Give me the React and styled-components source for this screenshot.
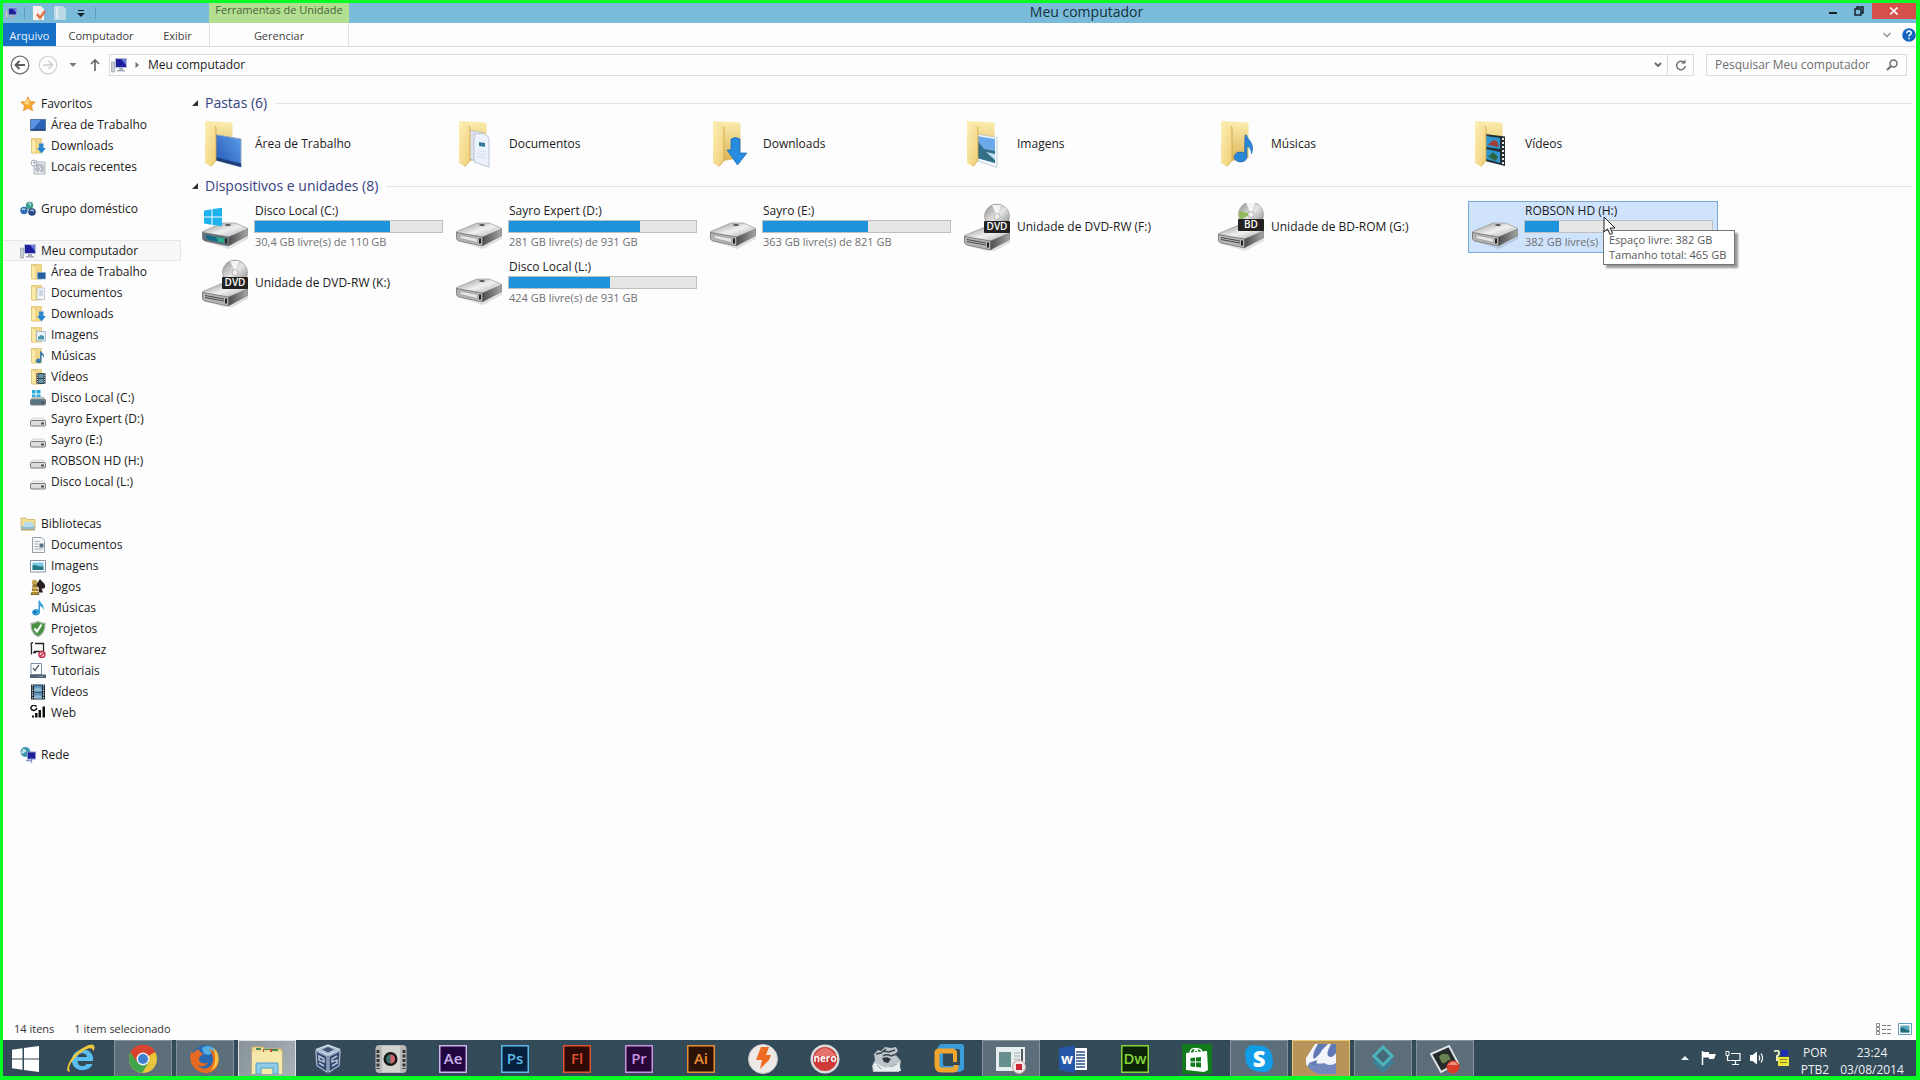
import styled, { createGlobalStyle, css } from "styled-components";

const GlobalStyle = createGlobalStyle`
  * {
    box-sizing: border-box;
  }

  body {
    margin: 0;
    background: #fdfdfd;
    color: #1b1b1b;
    font-family: "Open Sans", "Noto Sans", sans-serif;
    font-size: 12px;
    line-height: 16px;
  }

  button,
  input {
    margin: 0;
    padding: 0;
    border: 0;
    background: none;
    color: inherit;
    font: inherit;
  }

  svg {
    display: block;
    flex: none;
  }
`;

const Screen = styled.main`
  display: flex;
  flex-direction: column;
  min-height: 100vh;
  border: solid #08fb25;
  border-width: 3px 4px 4px 3px;
`;

/* ---------- title bar ---------- */

const TitleBar = styled.header`
  display: flex;
  height: 20px;
  background: #7abbd9;
`;

const QuickAccess = styled.div`
  display: flex;
  align-items: center;
  gap: 7px;
  width: 206px;
  padding-left: 2px;
`;

const QuickButton = styled.button`
  display: flex;
  justify-content: center;
  width: 14px;
`;

const QuickDivider = styled.span`
  width: 1px;
  height: 12px;
  background: #5f9cba;
`;

const ContextTitle = styled.div`
  width: 140px;
  background: #b3df91;
  color: #49623c;
  text-align: center;
  line-height: 13px;
  font-size: 11px;
`;

const WindowTitle = styled.h1`
  flex: 1;
  margin: 0;
  padding-left: 4px;
  color: #16303d;
  font-size: 14px;
  font-weight: 400;
  line-height: 18px;
  text-align: center;
`;

const WindowButton = styled.button`
  display: flex;
  align-items: center;
  justify-content: center;
  width: ${(p) => (p.$close ? 44 : 26)}px;
  height: 16px;
  background: ${(p) => (p.$close ? "#d5504a" : "transparent")};
`;

/* ---------- ribbon ---------- */

const Ribbon = styled.nav`
  display: flex;
  align-items: center;
  height: 24px;
  border-bottom: 1px solid #dcdddf;
  font-size: 11px;
`;

const RibbonTab = styled.button`
  width: ${(p) => p.$width}px;
  height: 23px;
  padding-top: 2px;
  color: #3d3d3d;
  ${(p) =>
    p.$file &&
    css`
      background: #1670c6;
      color: #e6f1fc;
    `}
  ${(p) =>
    p.$context &&
    css`
      margin-left: auto;
      border: solid #dfe0e1;
      border-width: 0 1px;
    `}
`;

const RibbonTabs = styled.div`
  display: flex;
  width: 346px;
`;

const RibbonTools = styled.div`
  display: flex;
  align-items: center;
  gap: 10px;
  margin-left: auto;
`;

/* ---------- address row ---------- */

const AddressRow = styled.div`
  display: flex;
  align-items: center;
  padding: 7px 9px 0 7px;
`;

const NavButtons = styled.div`
  display: flex;
  align-items: center;
`;

const IconButton = styled.button`
  display: flex;
  align-items: center;
  justify-content: center;
  align-self: stretch;
  min-width: ${(p) => p.$width || 0}px;
`;

const AddressBar = styled.div`
  display: flex;
  align-items: center;
  flex: 1;
  height: 22px;
  border: 1px solid #dcdcdc;
  padding-left: 1px;
`;

const Crumb = styled.button`
  margin-left: 8px;
`;

const CrumbArrow = styled.span`
  display: flex;
  margin-left: 8px;
`;

const AddressTools = styled.div`
  display: flex;
  align-self: stretch;
  margin-left: auto;

  > :last-child {
    border-left: 1px solid #dcdcdc;
  }
`;

const SearchBox = styled.label`
  display: flex;
  align-items: center;
  width: 201px;
  height: 22px;
  margin-left: 12px;
  padding: 0 8px;
  border: 1px solid #dcdcdc;
`;

const SearchInput = styled.input`
  flex: 1;
  min-width: 0;
  outline: 0;

  &::placeholder {
    color: #6f6f6f;
    opacity: 1;
  }
`;

/* ---------- navigation pane ---------- */

const Body = styled.div`
  display: flex;
  flex: 1;
`;

const Sidebar = styled.nav`
  display: flex;
  flex-direction: column;
  gap: 21px;
  width: 178px;
  padding-top: 17px;
`;

const NavItem = styled.a`
  display: flex;
  align-items: center;
  gap: 5px;
  height: 21px;
  padding-left: ${(p) => (p.$root ? 17 : 27)}px;
  border: 1px solid ${(p) => (p.$active ? "#e6e6e6" : "transparent")};
  border-left: 0;
  background: ${(p) => (p.$active ? "#f7f7f7" : "none")};
  color: inherit;
  text-decoration: none;
  white-space: nowrap;
`;

/* ---------- file list ---------- */

const Content = styled.section`
  flex: 1;
  padding: 16px 4px 0 10px;
`;

const Group = styled.section`
  margin-bottom: 5px;
`;

const GroupHeader = styled.h2`
  display: flex;
  align-items: center;
  gap: 6px;
  height: 22px;
  margin: 0 0 4px;
  color: #35427f;
  font-size: 14px;
  font-weight: 400;

  &::after {
    content: "";
    flex: 1;
    height: 1px;
    margin-left: 2px;
    background: #e4e4e8;
  }
`;

const Tiles = styled.div`
  display: grid;
  grid-template-columns: repeat(auto-fill, 250px);
  gap: 4px;
  padding-left: 7px;
`;

const TileSlot = styled.div`
  position: relative;
`;

const Tile = styled.button`
  display: flex;
  align-items: center;
  gap: 6px;
  width: 100%;
  height: 52px;
  padding: 0 4px 0 1px;
  border: 1px solid ${(p) => (p.$selected ? "#7ba9d6" : "transparent")};
  background: ${(p) => (p.$selected ? "#cfe3fc" : "none")};
  text-align: left;
  white-space: nowrap;
`;

const TileInfo = styled.span`
  display: flex;
  flex-direction: column;
  flex: 1;
  padding-bottom: ${(p) => (p.$usage ? 2 : 0)}px;
`;

const TileText = styled.span`
  padding-left: 1px;
  ${(p) =>
    p.$dim &&
    css`
      color: #707070;
      font-size: 11px;
    `}
`;

const UsageBar = styled.span`
  height: 13px;
  margin: 1px 0;
  border: 1px solid #bfbfbf;
  background: #e6e6e6;
`;

const UsageFill = styled.span`
  display: block;
  height: 100%;
  background: #1c93da;
`;

const Tooltip = styled.div`
  position: absolute;
  top: 29px;
  left: 135px;
  padding: 1px 8px 2px 5px;
  border: 1px solid #767676;
  background: #fff;
  box-shadow: 3px 3px 2px rgba(0, 0, 0, 0.4);
  color: #575757;
  font-size: 11px;
  line-height: 15px;
  white-space: nowrap;
`;

const Pointer = styled.svg`
  position: absolute;
  top: 15px;
  left: 135px;
`;

/* ---------- status bar ---------- */

const StatusBar = styled.footer`
  display: flex;
  align-items: center;
  gap: 20px;
  height: 24px;
  padding: 2px 4px 0 11px;
  color: #333;
  font-size: 11px;
`;

const ViewButtons = styled.div`
  display: flex;
  gap: 6px;
  margin-left: auto;
`;

/* ---------- taskbar ---------- */

const Taskbar = styled.footer`
  display: flex;
  height: 36px;
  background: #334a58;
`;

const StartButton = styled.button`
  display: flex;
  align-items: center;
  width: 49px;
  padding: 2px 0 0 9px;
`;

const TaskList = styled.div`
  display: flex;
  gap: 4px;
`;

const taskStates = {
  open: css`
    border-color: #84929b;
    background: #5c6e7a;
  `,
  active: css`
    border-color: #dfe3e5;
    background: linear-gradient(120deg, #87929a, #a9b1b5);
  `,
  alert: css`
    border-color: #e2cb75;
    background: #b9945a;
  `,
};

const TaskButton = styled.button`
  display: flex;
  align-items: center;
  justify-content: center;
  width: 58px;
  height: 36px;
  padding-top: 1px;
  border: 1px solid transparent;
  border-bottom: 0;
  ${(p) => taskStates[p.$state]}
`;

const Tray = styled.div`
  display: flex;
  align-items: center;
  gap: 8px;
  margin-left: auto;
  color: #eef2f4;
`;

const TrayTexts = styled.div`
  display: flex;
  gap: 2px;
  padding: 5px 7px 0 0;
`;

const TrayText = styled.div`
  width: ${(p) => p.$width}px;
  line-height: 17px;
  text-align: center;
`;

const TrayMore = styled.button`
  margin-right: 4px;
`;

/* ---------- small icons ---------- */

const Small = ({ children, size = 16 }) => (
  <svg width={size} height={size} viewBox="0 0 16 16" aria-hidden="true">
    {children}
  </svg>
);

const ComputerIcon = ({ size }) => (
  <Small size={size}>
    <path d="M.5 5h3v10H.5z" fill="#c9ced6" stroke="#8b93a1" strokeWidth=".6" />
    <path d="M4.500 1.500h11v9h-11z" fill="#1d1f9c" stroke="#b5bdd6" />
    <path d="M10 2h5v6z" fill="#6a78e0" />
    <path d="M8 11h4v2H8zM6 13h8v1.500H6z" fill="#a6adba" />
  </Small>
);

const StarIcon = () => (
  <Small>
    <path d="M8 .8l2.200 4.700 5.100.6-3.800 3.500 1 5.200L8 12.200l-4.500 2.600 1-5.200L.7 6.100l5.100-.6z" fill="#f7ab35" stroke="#dd8a24" strokeWidth=".7" />
    <path d="M8 2.500L9.400 6 8 9 4 7z" fill="#fdd884" />
  </Small>
);

const DesktopIcon = () => (
  <Small>
    <path d="M.5 2.500h15v11H.5z" fill="#2c62b5" stroke="#557aa8" />
    <path d="M1 3h10L3 12H1z" fill="#5b93de" />
    <path d="M1 12.500h14v1H1z" fill="#26364e" />
  </Small>
);

const SmallFolder = ({ children }) => (
  <Small>
    <path d="M1.500.5h10v14.500h-10z" fill="#f0d88b" stroke="#d9b95d" strokeWidth=".6" />
    <path d="M1.500.5l4.500 2V15.500l-4.500-1z" fill="#fbe9a8" stroke="#d9b95d" strokeWidth=".5" />
    {children}
  </Small>
);

const DownMark = () => <path d="M9 5.500h4.500V10H16l-4.500 5.500L7 10h2z" fill="#2b87cf" />;
const DesktopMark = () => <path d="M7.500 8.500h8V15h-8z" fill="#275f9f" stroke="#7fa7cf" strokeWidth=".7" />;
const PageMark = () => (
  <>
    <path d="M7 3h7.500v11.500H7z" fill="#f4f6f9" stroke="#a9b1bf" strokeWidth=".7" />
    <path d="M9 6h4M9 8h4M9 10h4" stroke="#a2b3cd" />
  </>
);
const PictureMark = () => (
  <>
    <path d="M6.500 4.500h9v9.500h-9z" fill="#e5f2fa" stroke="#8faabd" strokeWidth=".7" />
    <path d="M8 10l3-2 3 1v3.500H8z" fill="#4b95a5" />
  </>
);
const NoteMark = () => <path d="M10 2.500c1 2 5 2.500 4 8-.3-2-1-3-2.500-3.500v6a2.800 2.300 0 1 1-1.500-2.200z" fill="#3c7cae" />;
const FilmMark = () => (
  <>
    <path d="M6.500 4H15.500v11h-9z" fill="#39434e" />
    <path d="M8.500 5h5v4h-5zM8.500 10h5v4h-5z" fill="#6695a8" />
    <path d="M7.500 4v11M14.500 4v11" stroke="#d5d8da" strokeDasharray="1 1" strokeWidth=".7" />
  </>
);

const RecentIcon = () => (
  <Small>
    <path d="M4 3h11v12H4z" fill="#e9ebef" stroke="#9aa2ad" strokeWidth=".8" />
    <path d="M6 6h7M6 8h3M10 8h4M5 10h5M11 10h3M6 12h3M10 12h4" stroke="#8791a0" />
    <circle cx="4" cy="4" r="3" fill="#f4f6f8" stroke="#8f99a6" strokeWidth=".8" />
    <path d="M4 2.500V4h1.500" fill="none" stroke="#536170" strokeWidth=".8" />
  </Small>
);

const HomegroupIcon = () => (
  <Small>
    <circle cx="9.500" cy="4.500" r="3.700" fill="#3e9c8d" />
    <circle cx="4" cy="9.500" r="3.700" fill="#2f6bb4" />
    <circle cx="12" cy="11" r="3.800" fill="#2c4785" />
    <path d="M8 2.500c2-1 3 1 2 2.500M2 9c1-2 3-1 3 0M10.500 10c1-1.500 3-1 3 .5" fill="none" stroke="#b7dfe2" strokeWidth="1.200" />
  </Small>
);

const SmallDrive = ({ system }) => (
  <Small>
    {system && <path d="M2 0h3.500v3.500H2zM6.500 0h4v3.500h-4zM2 4.500h3.500V8H2zM6.500 4.500h4V8h-4z" fill="#27a9dc" />}
    <path d="M2.500 7h11l2 3H.5z" fill={system ? "#b5bfc7" : "#efefef"} stroke="#b3b5b7" strokeWidth=".5" />
    <rect x=".5" y="9.500" width="15" height="5.500" rx="1" fill={system ? "#5b7587" : "#dcdcdc"} stroke="#767a7d" />
    <path d="M11 12.500h3" stroke="#48525a" strokeWidth="2" />
  </Small>
);

const LibraryIcon = () => (
  <Small>
    <path d="M1 2h5l1 1.500h8V13H1z" fill="#f1dd91" stroke="#cfb364" strokeWidth=".8" />
    <path d="M4 6h9v6H4z" fill="#b6dcec" />
    <path d="M1 9l3 2h8l3-2v5H1z" fill="#92bcd0" />
    <path d="M1 13h14v1.500H1z" fill="#b3a971" />
  </Small>
);

const DocumentIcon = () => (
  <Small>
    <path d="M2.500.5h9l3 3v12h-12z" fill="#f5f6f7" stroke="#8d959e" strokeWidth=".9" />
    <path d="M4.500 4.500h5M4.500 7h4M4.500 9.500h4M4.500 12h8" stroke="#a5adb7" />
    <path d="M9.500 6.500h4v4h-4z" fill="#5b7286" />
  </Small>
);

const PictureIcon = () => (
  <Small>
    <path d="M.5 2.500h15v11.500H.5z" fill="#fff" stroke="#8494a1" />
    <path d="M2.500 4.500h11v7.500h-11z" fill="#7cc7e4" />
    <path d="M2.500 7.500c3-1.500 5 1.500 11 1v3.500h-11z" fill="#237a84" />
  </Small>
);

const GamesIcon = () => (
  <Small>
    <path d="M10 0c2 3 6 4.500 5 8-.5 2-2.500 2-3.500 1.200L13 13.500H8l1-4.500-3-3z" fill="#27201e" />
    <circle cx="4.500" cy="3.500" r="2.700" fill="#c4a452" />
    <path d="M3 6h3.500l1 6 1.500 3.500H1L2.500 12z" fill="#b58d33" stroke="#5f451b" strokeWidth=".7" />
    <path d="M2 9h6M2 12.500h7" stroke="#f5de90" />
  </Small>
);

const MusicIcon = () => (
  <Small>
    <path d="M8.500.5h1.200c.8 3 5.200 4 3.800 10-.5-3-1.800-4-3.500-4.500v6.300a4 3.200 0 1 1-1.500-2.500z" fill="#3aa0d8" />
    <circle cx="5" cy="12" r="1.500" fill="#1769b1" />
  </Small>
);

const ShieldIcon = () => (
  <Small>
    <path d="M8 .5c2 1.200 4.500 1.800 7 1.800 0 6-1 10.500-7 13.200C2 12.800 1 8.300 1 2.300 3.500 2.300 6 1.700 8 .5z" fill="#489342" stroke="#a5b3a3" strokeWidth="1.300" />
    <path d="M4.500 7.500L7 10.500l4.500-7" fill="none" stroke="#fff" strokeWidth="2" />
  </Small>
);

const SoftwareIcon = () => (
  <Small>
    <path d="M3 .5C.5.5 1 3 1.500 4v8.500M5 1.500h8.500V9M4 9.500h8M3 10.500h3" fill="none" stroke="#222" strokeWidth="1.300" />
    <circle cx="12" cy="12.500" r="3" fill="#f4d7dc" stroke="#c42e4b" strokeWidth="1.400" />
    <path d="M10 14.500l4-4" stroke="#c42e4b" strokeWidth="1.200" />
  </Small>
);

const TutorialIcon = () => (
  <Small>
    <path d="M1 .5h10.500v11H1z" fill="#fff" stroke="#7e91a3" />
    <path d="M3 5l2 2.500L9 2" fill="none" stroke="#5a6c79" strokeWidth="1.400" />
    <path d="M0 11.500h16v3.500H0z" fill="#526272" />
    <path d="M8 13.500h6" stroke="#aebdcb" strokeDasharray="1 1" />
  </Small>
);

const FilmIcon = () => (
  <Small>
    <path d="M1 .5h14v15H1z" fill="#1c2934" />
    <path d="M4 1.500h8v6H4zM4 8.500h8v6H4z" fill="#5d93bd" />
    <path d="M4 5l4-1.500 4 2v2H4zM4 12l4-1 4 1.500v2H4z" fill="#8cb8d1" />
    <path d="M2.500 1v14M13.500 1v14" stroke="#d9e0e4" strokeWidth="1.200" strokeDasharray="1.200 1.200" />
  </Small>
);

const SignalIcon = () => (
  <Small>
    <path d="M2 10.500h2V12.500H2zM5 8h2.500v4.500H5zM8.500 5H11v7.500H8.500zM12.500 1.500H15v11h-2.500z" fill="#111" />
    <path d="M6.500 1.500C4-1 .5 1 1 3.500c.5 2 3.500 2.500 5 1L7 3" fill="none" stroke="#111" strokeWidth="1.500" />
  </Small>
);

const NetworkIcon = () => (
  <Small>
    <circle cx="5.500" cy="5" r="5" fill="#3d97b3" />
    <path d="M3 2c2 0 4 1 3 3-2 0-3 3-5 1z" fill="#bfe4df" />
    <path d="M7.500 5h8v7h-8z" fill="#1c239b" stroke="#8690cf" />
    <path d="M11.500 12v4M6 13.500h6" stroke="#8c94cb" strokeWidth="1.300" />
  </Small>
);

/* ---------- large icons ---------- */

const Large = ({ children }) => (
  <svg width="48" height="48" viewBox="0 0 48 48" aria-hidden="true">
    <defs>
      <linearGradient id="folderBack" x1="0" y1="0" x2="0" y2="1">
        <stop offset="0" stopColor="#fbedaf" />
        <stop offset="1" stopColor="#dcb456" />
      </linearGradient>
      <linearGradient id="folderFlap" x1="0" y1="0" x2="1" y2="1">
        <stop offset="0" stopColor="#fdf0b8" />
        <stop offset="1" stopColor="#efce76" />
      </linearGradient>
      <linearGradient id="screen" x1="0" y1="1" x2="1" y2="0">
        <stop offset="0" stopColor="#2454b0" />
        <stop offset="1" stopColor="#5b9fec" />
      </linearGradient>
      <linearGradient id="driveTop" x1="0" y1="0" x2="1" y2="1">
        <stop offset="0" stopColor="#8f8f8f" />
        <stop offset=".5" stopColor="#f0f0f0" />
        <stop offset="1" stopColor="#a2a2a2" />
      </linearGradient>
      <linearGradient id="driveSide" x1="0" y1="0" x2="1" y2="0">
        <stop offset="0" stopColor="#4c4c4c" />
        <stop offset="1" stopColor="#a8a8a8" />
      </linearGradient>
      <linearGradient id="disc" x1="0" y1="0" x2="1" y2="1">
        <stop offset="0" stopColor="#8d8d8d" />
        <stop offset=".5" stopColor="#e6e6e6" />
        <stop offset="1" stopColor="#7d7d7d" />
      </linearGradient>
    </defs>
    {children}
  </svg>
);

const Folder = ({ children }) => (
  <Large>
    <path d="M7 1l24 1.500q1.500.2 1.500 2V38L15 41z" fill="url(#folderBack)" />
    {children}
    <path d="M5 1.500q0-1 1-.5l9 5q1 .6 1 2v32.500L11 46.500 5 43z" fill="url(#folderFlap)" />
    <path d="M15 6q1 .6 1 2v32.500L11 46.500" fill="none" stroke="#cda544" strokeWidth=".8" />
  </Large>
);

const Drive = ({ system, slot, top = 19 }) => (
  <g transform={`translate(0 ${top})`}>
    <path d="M2.500 18.500l26 6.500 20-11v2.500L29 27z" fill="#000" opacity=".12" />
    <path d="M2.500 9.500L23 1h12.500L48 6.500v2L28 16 2.500 11z" fill="url(#driveTop)" stroke="#8d8d8d" strokeWidth=".6" />
    <path d="M2.500 10.500L28.500 15v9L5 19q-2.500-.8-2.500-3z" fill={system ? "#5d747d" : "#b4b4b4"} stroke="#6e6e6e" strokeWidth=".8" />
    <path d="M28.500 15L48 7v6.500L28.500 24z" fill="url(#driveSide)" stroke="#727272" strokeWidth=".6" />
    {system && <path d="M6 13l18 3.500v4.500L7 17.500z" fill="#146a86" />}
    {system && <path d="M16 15l8 1.500v4.500l-6-1.500z" fill="#2eaa8b" />}
    {slot && <path d="M5 13.500l19 3.500M5 15.500l19 3.500" stroke="#4a4a4a" />}
    {!system && !slot && <path d="M5.500 13l18 3.500v4l-17-4z" fill="#e6e6e6" stroke="#909090" strokeWidth=".6" />}
    <path d="M26 16.500v5" stroke="#222" strokeWidth="2" />
    <ellipse cx="28" cy="3" rx="3" ry="1" fill="#555" />
  </g>
);

const DesktopFolder = () => (
  <Folder>
    <path d="M15 14.500l26 4.500v28L15 40z" fill="url(#screen)" stroke="#93a9c4" />
    <path d="M15 37l26 6.500V47L15 40z" fill="#1d3f78" />
  </Folder>
);

const DocumentsFolder = () => (
  <Folder>
    <path d="M14 10l16 3v29l-16-3z" fill="#dfe2ee" stroke="#b2b6c4" strokeWidth=".7" />
    <path d="M20 14l10-.5 5 4V47l-15-5z" fill="#ecf2fb" stroke="#a7b3c5" strokeWidth=".7" />
    <path d="M25 22l6 1v4l-6-1z" fill="#387b9b" />
    <path d="M23 30l9 2M23 33l9 2M23 36l9 2" stroke="#cbd7e4" strokeWidth=".8" />
  </Folder>
);

const DownloadsFolder = () => (
  <Folder>
    <path d="M23 19q4-3 9 0v14h7L29.500 45 19 30h4z" fill="#278be0" stroke="#1768b4" strokeWidth=".7" />
  </Folder>
);

const PicturesFolder = () => (
  <Folder>
    <path d="M14 14l21 3.500v30L14 40z" fill="#f4fafe" stroke="#a9bccb" strokeWidth=".7" />
    <path d="M15 16l18 3v24l-18-5z" fill="#6ba9ea" />
    <path d="M15 20l7 9 11 2v12l-18-5z" fill="#356f86" />
    <path d="M24 32l9 2v6z" fill="#bfe0f0" />
  </Folder>
);

const MusicFolder = () => (
  <Folder>
    <path d="M29 15h1.500c1 5 9 8 5 19-.5-5-2-7-4.500-8v11.500a6.500 5 0 1 1-2.500-4.500z" fill="#2a87d5" stroke="#1a62aa" strokeWidth=".6" />
  </Folder>
);

const VideosFolder = () => (
  <Folder>
    <path d="M15 14l20 2.500V46L15 41z" fill="#222f35" />
    <path d="M16 16l14 2v11l-14-2zM16 29l14 3v11l-14-4z" fill="#2f96d1" />
    <path d="M18 25l5-5 4 1 2 6z" fill="#a33f3a" />
    <path d="M18 37l5-5 5 5-2 4z" fill="#2c6641" />
    <path d="M33 18v27" stroke="#e7e7e7" strokeWidth="2" strokeDasharray="2 2" />
  </Folder>
);

const SystemDrive = () => (
  <Large>
    <Drive system />
    <path d="M4 7.500l7.500-1.200v7.200H4zM12.500 6.100L22 4.800v8.700h-9.500zM4 14.500h7.500v7.200L4 20.500zM12.500 14.500H22v8.700l-9.500-1.300z" fill="#1eb3ee" />
  </Large>
);

const HardDrive = () => (
  <Large>
    <Drive />
  </Large>
);

const OpticalDrive = ({ label, tint, top = 23 }) => (
  <Large>
    <Drive slot top={top} />
    <circle cx="35" cy={top - 9.500} r="12.500" fill="url(#disc)" stroke="#8f8f8f" strokeWidth=".6" />
    {tint && <path d={`M35 ${top - 10}L23.500 ${top - 13}a12 12 0 0 0 1 9z`} fill="#93bb5c" />}
    <path d={`M35 ${top - 10}l-5-11h9z`} fill="#fff" opacity=".8" />
    <circle cx="35" cy={top - 9.500} r="3" fill="#eee" stroke="#999" strokeWidth=".6" />
    <rect x="22" y={top - 5} width="26" height="12" rx="1" fill="#222" />
    <text x="35" y={top + 4} fill="#fff" fontSize="10" fontWeight="600" textAnchor="middle">
      {label}
    </text>
  </Large>
);

/* ---------- taskbar icons ---------- */

const AppIcon = ({ children }) => (
  <svg width="30" height="30" viewBox="0 0 30 30" aria-hidden="true">
    {children}
  </svg>
);

const Adobe = ({ label, color, fill }) => (
  <AppIcon>
    <rect x="1.750" y="1.750" width="26.500" height="26.500" fill={fill} stroke={color} strokeWidth="1.500" />
    <text x="15" y="20" fill={color} fontSize="15" fontWeight="600" textAnchor="middle">
      {label}
    </text>
  </AppIcon>
);

const WindowsLogo = () => (
  <svg width="27" height="26" viewBox="0 0 27 26" aria-hidden="true">
    <path d="M0 3.800L10.500 2.200v10.300H0zM12 2L27 0v12.500H12zM0 13.500h10.500v10.300L0 22.200zM12 13.500h15V26l-15-2z" fill="#fff" />
  </svg>
);

const ExplorerE = () => (
  <AppIcon>
    <path d="M27 17H11.500c.3 6 7 6.500 9 3h6C24 28 8 29 6 18 4.500 7 18 2 24.500 8.500 27 11 27.500 14 27 17zm-6-4c-.6-5-8.500-5-9.500 0z" fill="#58bdf0" />
    <path d="M4 27C-2 31 2 15 12 7.500 20 1 28-2 28.500 3c.2 1.500-.5 3-1.500 4.500.5-5-5-4-12 1C6 15 1 24 4 27z" fill="#efc53a" />
  </AppIcon>
);

const Chrome = () => (
  <AppIcon>
    <circle cx="15" cy="15" r="14" fill="#e9c53b" />
    <path d="M15 15L2.900 8A14 14 0 0 1 27.200 8z" fill="#d9432f" />
    <path d="M15 15L2.900 8A14 14 0 0 0 14 29l7-11z" fill="#41a54e" />
    <path d="M15 8.500h12.400a14 14 0 0 0-25-.2L9 18z" fill="#d9432f" />
    <circle cx="15" cy="15" r="6.500" fill="#eef1f3" />
    <circle cx="15" cy="15" r="5" fill="#3f7fd0" />
  </AppIcon>
);

const Firefox = () => (
  <AppIcon>
    <circle cx="15.500" cy="14" r="13" fill="#2669b2" />
    <path d="M12 4c3-3 10-3 13 2l-6 5-5-1z" fill="#54aee2" />
    <path d="M1 8c1 1 2 1 3 .5C6 6 8 6 9 5c0 3 2 4 4 4-1 3-4 3-4 6 0 4 5 6 9 3-1 5-9 6-11 2 3 7 15 6 16-4 0-5-2-8-4-11 6 2 10 7 9.500 13C28 25 21 30 14 29 5 28-2 19 1 8z" fill="#e66a20" />
    <path d="M23 4c5 3 6 8 5.500 13-1 5-4 8-8 10 5-6 6-15 2.500-23z" fill="#f6c240" />
  </AppIcon>
);

const FileExplorer = () => (
  <svg width="32" height="30" viewBox="0 0 32 30" aria-hidden="true">
    <path d="M1 4q0-1 1-1h10l2 2h16q1 0 1 1v24H1z" fill="#f1dd97" stroke="#cfb566" />
    <path d="M5 4h5v2H5zM13 5h6v1h-6zM21 5h6v2h-6z" fill="#4d8a5a" />
    <path d="M12 5h1v3h-1zM19 5h2v3h-2z" fill="#bd4f3a" />
    <path d="M1 8h30v22H1z" fill="#f7e8ac" />
    <path d="M5 30V20q0-1 1-1h20q1 0 1 1v10h-5v-6H10v6z" fill="#8dcbe8" stroke="#4f9ec9" />
  </svg>
);

const VirtualBox = () => (
  <AppIcon>
    <path d="M14 0l13 5-1 17-12 8L2 22 1 5z" fill="#5a7497" />
    <path d="M14 1l12 4.500-12 6L2 5.500z" fill="#a9bed3" stroke="#dbe5ee" />
    <path d="M14 3l6 2.500-6 3-6-3z" fill="#3f5877" />
    <path d="M2 7l11 5.500V28L3 21.500zM26 7l-11 5.500V28l10-6.500z" fill="#33496d" stroke="#b4c3d4" />
    <path d="M5 12l5 3v3l-5-2zM5 19l5 3M23 12l-5 3v3l5-2v3l-5 3" stroke="#b4c3d4" strokeWidth="1.500" fill="none" />
  </AppIcon>
);

const Camera = () => (
  <svg width="32" height="30" viewBox="0 0 32 30" aria-hidden="true">
    <rect x=".5" y="1" width="31" height="28" rx="4" fill="#b8b8b6" />
    <path d="M3 6v19M29 6v19" stroke="#343434" strokeWidth="3" strokeDasharray="3 1.500" />
    <path d="M7 2h18v26H7z" fill="#d2d2cf" />
    <circle cx="15.500" cy="15" r="7" fill="#171717" />
    <circle cx="15.500" cy="15" r="4.500" fill="#396f6b" />
    <path d="M15.500 10.500a4.500 4.500 0 0 1 0 9z" fill="#d7636a" />
  </svg>
);

const Daemon = () => (
  <AppIcon>
    <circle cx="15" cy="15" r="14.500" fill="#ece9e7" stroke="#c8c8c8" />
    <path d="M13 3h8l-3 8h5l-2 5-9 9 2-9H8z" fill="#ee6b24" />
  </AppIcon>
);

const Nero = () => (
  <AppIcon>
    <circle cx="15" cy="15" r="14.500" fill="#d9dcdd" />
    <circle cx="15" cy="15" r="12" fill="#cf3a38" />
    <path d="M4 12Q15-4 26 12z" fill="#e4726d" />
    <path d="M3 12h24v6H3z" fill="#c22c2c" />
    <text x="15" y="18" fill="#fff" fontSize="10" fontWeight="700" textAnchor="middle">
      nero
    </text>
  </AppIcon>
);

const Tiger = () => (
  <svg width="32" height="28" viewBox="0 0 32 28" aria-hidden="true">
    <path d="M3 9l4-4 3 1 4-4 6 1 5-1 2 4-3 3 6 7-2 11H2l-1-6 3-6z" fill="#bcc5ca" />
    <path d="M5 9l5-1 5-4M12 6l6 1 6-2M12 11c3-2 5-2 8 0l6-2" stroke="#3a464d" strokeWidth="1.500" fill="none" />
    <path d="M11 13l5-1 4 2-3 4-4-1z" fill="#303a40" />
    <path d="M2 19c6-2 6 2 11 3s10-1 15-5l2 9H3z" fill="#e9eef0" />
    <path d="M6 20l4 4M20 22l6-3" stroke="#8d999f" />
  </svg>
);

const Vmware = () => (
  <AppIcon>
    <rect x="6" y="2" width="23" height="23" rx="5" fill="none" stroke="#3b9cdb" strokeWidth="6" />
    <path d="M20 7H5q-2 0-2 2v12q0 5 5 5h11q3 0 3-3v-2" fill="none" stroke="#f0a62e" strokeWidth="5" />
    <path d="M19 7q2 0 2 2v9" fill="none" stroke="#f0a62e" strokeWidth="4" />
  </AppIcon>
);

const Recorder = () => (
  <AppIcon>
    <path d="M0 3h29v24H0z" fill="#e8edee" />
    <path d="M3 8h12v15H3z" fill="#668f8e" />
    <path d="M18 9h6M18 12h6M18 15h6M18 18h5" stroke="#a5adb0" />
    <path d="M26 5v14" stroke="#505a5f" strokeWidth="2" />
    <circle cx="23" cy="23" r="6.500" fill="#f1e9e9" stroke="#c9a1a1" />
    <path d="M20 20h6v6h-6z" fill="#cd2638" />
  </AppIcon>
);

const Word = () => (
  <AppIcon>
    <path d="M15 4h14v22H15z" fill="#fff" />
    <path d="M18 8h9M18 11h9M18 14h9M18 17h9M18 20h9M18 23h9" stroke="#27508f" strokeWidth="1.500" />
    <path d="M1 4l16-3v28L1 26z" fill="#2457a7" />
    <text x="9" y="20" fill="#fff" fontSize="14" fontWeight="700" textAnchor="middle">
      w
    </text>
  </AppIcon>
);

const Store = () => (
  <AppIcon>
    <path d="M0 0h30v30H0z" fill="#127a1c" />
    <path d="M4 9l21-2 1 19-4 2-18-2z" fill="#fff" />
    <path d="M8 10c0-7 7-7 8-1M12 9c1-6 8-5 8 0" fill="none" stroke="#fff" strokeWidth="1.500" />
    <path d="M8.500 14l4.500-.5v4H8.500zM14 13.400l5-.5v4.600h-5zM8.500 18.500H13v4.500l-4.500-.5zM14 18.500h5v5l-5-.5z" fill="#127a1c" />
  </AppIcon>
);

const Skype = () => (
  <AppIcon>
    <path d="M15 1.500c8 0 14 6 13.500 13.500 2 6-2 13-8 13.500-1 0-2-.3-3-.7C8 28.500 1 22 1.500 14 0 8 2 2 8 1c3-.3 4 .7 7 .5z" fill="#129ce6" />
    <text x="15" y="23" fill="#fff" fontSize="22" fontWeight="800" textAnchor="middle">
      S
    </text>
  </AppIcon>
);

const CCloud = () => (
  <AppIcon>
    <path d="M0 0h30v30H0z" fill="#f2f5fb" />
    <path d="M12 0h10l-6 6q-3 6-8 9-3-4 4-15z" fill="#6178b3" />
    <path d="M30 0v9q-4 6-8 3-2-3 3-12z" fill="#6178b3" />
    <path d="M3 19q12 1 15 0 6 4 12 0v11H13Q5 30 0 26z" fill="#7389bd" />
    <path d="M3 19l8-3-1 6z" fill="#6178b3" />
    <path d="M0 0h9L0 14zM0 20v10h12Q3 26 0 20z" fill="#b9945a" />
  </AppIcon>
);

const Diamond = () => (
  <AppIcon>
    <path d="M4 18l11 11 11-11-3-3-8 8-8-8z" fill="#3b7f97" />
    <path d="M15 3l9 9-9 9-9-9z" fill="#446a7a" stroke="#4bb4bd" strokeWidth="3" />
  </AppIcon>
);

const Photo = () => (
  <AppIcon>
    <path d="M1 10L19 2l9 17-17 9z" fill="#252a2b" stroke="#dfe3e4" strokeWidth="2" />
    <path d="M9 13c3-5 6-2 9-3l3 6c-4-1-4 4-9 3z" fill="#6b8352" />
    <circle cx="23" cy="23" r="6.500" fill="#d6402b" />
    <path d="M18 21q5-7 10 0z" fill="#ef9180" />
  </AppIcon>
);

/* ---------- data ---------- */

const navGroups = [
  [
    ["Favoritos", <StarIcon />],
    ["Área de Trabalho", <DesktopIcon />],
    ["Downloads", <SmallFolder><DownMark /></SmallFolder>],
    ["Locais recentes", <RecentIcon />],
  ],
  [["Grupo doméstico", <HomegroupIcon />]],
  [
    ["Meu computador", <ComputerIcon />],
    ["Área de Trabalho", <SmallFolder><DesktopMark /></SmallFolder>],
    ["Documentos", <SmallFolder><PageMark /></SmallFolder>],
    ["Downloads", <SmallFolder><DownMark /></SmallFolder>],
    ["Imagens", <SmallFolder><PictureMark /></SmallFolder>],
    ["Músicas", <SmallFolder><NoteMark /></SmallFolder>],
    ["Vídeos", <SmallFolder><FilmMark /></SmallFolder>],
    ["Disco Local (C:)", <SmallDrive system />],
    ["Sayro Expert (D:)", <SmallDrive />],
    ["Sayro (E:)", <SmallDrive />],
    ["ROBSON HD (H:)", <SmallDrive />],
    ["Disco Local (L:)", <SmallDrive />],
  ],
  [
    ["Bibliotecas", <LibraryIcon />],
    ["Documentos", <DocumentIcon />],
    ["Imagens", <PictureIcon />],
    ["Jogos", <GamesIcon />],
    ["Músicas", <MusicIcon />],
    ["Projetos", <ShieldIcon />],
    ["Softwarez", <SoftwareIcon />],
    ["Tutoriais", <TutorialIcon />],
    ["Vídeos", <FilmIcon />],
    ["Web", <SignalIcon />],
  ],
  [["Rede", <NetworkIcon />]],
];

const folders = [
  { name: "Área de Trabalho", icon: <DesktopFolder /> },
  { name: "Documentos", icon: <DocumentsFolder /> },
  { name: "Downloads", icon: <DownloadsFolder /> },
  { name: "Imagens", icon: <PicturesFolder /> },
  { name: "Músicas", icon: <MusicFolder /> },
  { name: "Vídeos", icon: <VideosFolder /> },
];

const drives = [
  { name: "Disco Local (C:)", icon: <SystemDrive />, used: 72, space: "30,4 GB livre(s) de 110 GB" },
  { name: "Sayro Expert (D:)", icon: <HardDrive />, used: 70, space: "281 GB livre(s) de 931 GB" },
  { name: "Sayro (E:)", icon: <HardDrive />, used: 56, space: "363 GB livre(s) de 821 GB" },
  { name: "Unidade de DVD-RW (F:)", icon: <OpticalDrive label="DVD" /> },
  { name: "Unidade de BD-ROM (G:)", icon: <OpticalDrive label="BD" tint top={21} /> },
  {
    name: "ROBSON HD (H:)",
    icon: <HardDrive />,
    used: 18,
    space: "382 GB livre(s)",
    tip: ["Espaço livre: 382 GB", "Tamanho total: 465 GB"],
  },
  { name: "Unidade de DVD-RW (K:)", icon: <OpticalDrive label="DVD" /> },
  { name: "Disco Local (L:)", icon: <HardDrive />, used: 54, space: "424 GB livre(s) de 931 GB" },
];

const tasks = [
  ["Internet Explorer", <ExplorerE />],
  ["Google Chrome", <Chrome />, "open"],
  ["Mozilla Firefox", <Firefox />, "open"],
  ["Explorador de Arquivos", <FileExplorer />, "active"],
  ["VirtualBox", <VirtualBox />],
  ["Câmera", <Camera />],
  ["After Effects", <Adobe label="Ae" color="#cdb3f0" fill="#22063f" />],
  ["Photoshop", <Adobe label="Ps" color="#5cb8e4" fill="#07203f" />],
  ["Flash", <Adobe label="Fl" color="#e0512f" fill="#2e0a06" />],
  ["Premiere", <Adobe label="Pr" color="#c893e4" fill="#270738" />],
  ["Illustrator", <Adobe label="Ai" color="#ea8c35" fill="#2c1206" />],
  ["Daemon Tools", <Daemon />],
  ["Nero", <Nero />],
  ["Tiger", <Tiger />],
  ["VMware", <Vmware />],
  ["Gravador", <Recorder />, "open"],
  ["Word", <Word />],
  ["Dreamweaver", <Adobe label="Dw" color="#86d63a" fill="#0c2308" />],
  ["Loja", <Store />],
  ["Skype", <Skype />, "open"],
  ["Conexão", <CCloud />, "alert"],
  ["Diamond", <Diamond />, "open"],
  ["Fotos", <Photo />, "open"],
];

function Item({ name, icon, used, space, tip }) {
  return (
    <TileSlot>
      <Tile $selected={Boolean(tip)}>
        {icon}
        <TileInfo $usage={Boolean(space)}>
          <TileText>{name}</TileText>
          {space && (
            <>
              <UsageBar>
                <UsageFill style={{ width: `${used}%` }} />
              </UsageBar>
              <TileText $dim>{space}</TileText>
            </>
          )}
        </TileInfo>
      </Tile>
      {tip && (
        <>
          <Tooltip role="tooltip">
            {tip.map((line) => (
              <div key={line}>{line}</div>
            ))}
          </Tooltip>
          <Pointer width="13" height="20" viewBox="0 0 13 20" aria-hidden="true">
            <path d="M1 1v15l3.500-3.200L7 18.500l2.600-1.100L7.200 12H12z" fill="#fff" stroke="#222" />
          </Pointer>
        </>
      )}
    </TileSlot>
  );
}

function ItemGroup({ title, items }) {
  return (
    <Group>
      <GroupHeader>
        <svg width="8" height="8" viewBox="0 0 8 8" aria-hidden="true">
          <path d="M7 1v6H1z" fill="#333" />
        </svg>
        {title}
      </GroupHeader>
      <Tiles>
        {items.map((item) => (
          <Item key={item.name} {...item} />
        ))}
      </Tiles>
    </Group>
  );
}

function Header() {
  return (
    <>
      <TitleBar>
        <QuickAccess>
          <ComputerIcon size={12} />
          <QuickDivider />
          <QuickButton aria-label="Propriedades">
            <Small>
              <path d="M2 1h8l3 3v11H2z" fill="#f6f1ee" />
              <path d="M6 9l3 4 5-7" fill="none" stroke="#dd7147" strokeWidth="2.500" />
            </Small>
          </QuickButton>
          <QuickButton aria-label="Nova pasta">
            <Small>
              <path d="M2 1h9l3 3v11H2z" fill="#bcd9e6" />
              <path d="M5 2v12" stroke="#dcecf3" strokeWidth="2" />
            </Small>
          </QuickButton>
          <QuickButton aria-label="Personalizar">
            <svg width="8" height="8" viewBox="0 0 8 8">
              <path d="M1 1.500h6" stroke="#10202a" />
              <path d="M0 4h8L4 8z" fill="#10202a" />
            </svg>
          </QuickButton>
          <QuickDivider />
        </QuickAccess>
        <ContextTitle>Ferramentas de Unidade</ContextTitle>
        <WindowTitle>Meu computador</WindowTitle>
        <WindowButton aria-label="Minimizar">
          <svg width="8" height="8" viewBox="0 0 8 8">
            <path d="M0 5h8v2H0z" fill="#14222b" />
          </svg>
        </WindowButton>
        <WindowButton aria-label="Restaurar">
          <svg width="10" height="10" viewBox="0 0 10 10">
            <path d="M1 3h6v6H1zM3 3V1h6v6H7" fill="none" stroke="#14222b" strokeWidth="1.500" />
          </svg>
        </WindowButton>
        <WindowButton $close aria-label="Fechar">
          <svg width="8" height="8" viewBox="0 0 8 8">
            <path d="M0 .5l7.500 7M7.500.5l-7.500 7" stroke="#fff" strokeWidth="1.600" />
          </svg>
        </WindowButton>
      </TitleBar>
      <Ribbon>
        <RibbonTabs>
          <RibbonTab $width={53} $file>
            Arquivo
          </RibbonTab>
          <RibbonTab $width={90}>Computador</RibbonTab>
          <RibbonTab $width={63}>Exibir</RibbonTab>
          <RibbonTab $width={140} $context>
            Gerenciar
          </RibbonTab>
        </RibbonTabs>
        <RibbonTools>
          <IconButton aria-label="Expandir faixa">
            <svg width="10" height="8" viewBox="0 0 10 8">
              <path d="M1.500 2L5 5.500 8.500 2" fill="none" stroke="#8a939c" strokeWidth="1.500" />
            </svg>
          </IconButton>
          <IconButton aria-label="Ajuda">
            <svg width="14" height="14" viewBox="0 0 14 14">
              <circle cx="7" cy="7" r="6.800" fill="#1565c0" />
              <path d="M4.800 5.200c0-3 4.600-2.700 4.400 0C9 6.700 7 6.800 7 8.600M7 9.800v1.500" fill="none" stroke="#fff" strokeWidth="1.500" />
            </svg>
          </IconButton>
        </RibbonTools>
      </Ribbon>
      <AddressRow>
        <NavButtons>
          <IconButton aria-label="Voltar">
            <svg width="20" height="20" viewBox="0 0 20 20">
              <circle cx="10" cy="10" r="8.800" fill="none" stroke="#727272" strokeWidth="1.300" />
              <path d="M15 10H6M9.500 6L5.500 10l4 4" fill="none" stroke="#5c5c5c" strokeWidth="1.800" />
            </svg>
          </IconButton>
          <IconButton $width={36} aria-label="Avançar">
            <svg width="20" height="20" viewBox="0 0 20 20">
              <circle cx="10" cy="10" r="8.800" fill="none" stroke="#d3d3d3" strokeWidth="1.200" />
              <path d="M5 10h9M10.500 6l4 4-4 4" fill="none" stroke="#cdcdcd" strokeWidth="1.500" />
            </svg>
          </IconButton>
          <IconButton $width={14} aria-label="Locais recentes">
            <svg width="8" height="6" viewBox="0 0 8 6">
              <path d="M.5 1h7L4 5z" fill="#777" />
            </svg>
          </IconButton>
          <IconButton $width={29} aria-label="Subir">
            <svg width="10" height="14" viewBox="0 0 10 14">
              <path d="M5 13V2M1 6l4-4 4 4" fill="none" stroke="#696969" strokeWidth="1.700" />
            </svg>
          </IconButton>
        </NavButtons>
        <AddressBar>
          <ComputerIcon />
          <CrumbArrow>
            <svg width="5" height="8" viewBox="0 0 5 8">
              <path d="M.5 1v6L4 4z" fill="#707070" />
            </svg>
          </CrumbArrow>
          <Crumb>Meu computador</Crumb>
          <AddressTools>
            <IconButton $width={18} aria-label="Histórico">
              <svg width="8" height="6" viewBox="0 0 8 6">
                <path d="M1 1l3 3 3-3" fill="none" stroke="#666" strokeWidth="1.800" />
              </svg>
            </IconButton>
            <IconButton $width={26} aria-label="Atualizar">
              <svg width="12" height="12" viewBox="0 0 12 12">
                <path d="M9.500 4A4.300 4.300 0 1 0 10.300 7" fill="none" stroke="#707070" strokeWidth="1.500" />
                <path d="M6 4.500h4.500V.5z" fill="#707070" />
              </svg>
            </IconButton>
          </AddressTools>
        </AddressBar>
        <SearchBox>
          <SearchInput type="search" placeholder="Pesquisar Meu computador" aria-label="Pesquisar Meu computador" />
          <svg width="12" height="12" viewBox="0 0 12 12" aria-hidden="true">
            <circle cx="7.500" cy="4.500" r="3.500" fill="none" stroke="#6e6e6e" strokeWidth="1.500" />
            <path d="M5 7L1 11" stroke="#6e6e6e" strokeWidth="2" />
          </svg>
        </SearchBox>
      </AddressRow>
    </>
  );
}

function App() {
  return (
    <Screen>
      <GlobalStyle />
      <Header />
      <Body>
        <Sidebar>
          {navGroups.map((group) => (
            <div key={group[0][0]}>
              {group.map(([name, icon], i) => (
                <NavItem key={name} href="#" $root={i === 0} $active={name === "Meu computador"}>
                  {icon}
                  {name}
                </NavItem>
              ))}
            </div>
          ))}
        </Sidebar>
        <Content>
          <ItemGroup title="Pastas (6)" items={folders} />
          <ItemGroup title="Dispositivos e unidades (8)" items={drives} />
        </Content>
      </Body>
      <StatusBar>
        <span>14 itens</span>
        <span>1 item selecionado</span>
        <ViewButtons>
          <IconButton aria-label="Detalhes">
            <svg width="17" height="14" viewBox="0 0 17 14">
              <path d="M1.500 1.500h3v3h-3zM1.500 5.500h3v3h-3zM1.500 9.500h3v3h-3z" fill="#fff" stroke="#8a8a8a" />
              <path d="M7 3.500h4M12 3.500h4M7 7.500h4M12 7.500h4M7 11.500h4M12 11.500h4" stroke="#777" />
            </svg>
          </IconButton>
          <IconButton aria-label="Ícones grandes">
            <svg width="14" height="14" viewBox="0 0 14 14">
              <path d="M.5 1.500h13v11H.5z" fill="#fff" stroke="#5f9cc0" />
              <path d="M2.500 3.500h9v7h-9z" fill="#59a8bf" />
              <path d="M2.500 5l9 4v1.500h-9z" fill="#216878" />
            </svg>
          </IconButton>
        </ViewButtons>
      </StatusBar>
      <Taskbar>
        <StartButton aria-label="Iniciar">
          <WindowsLogo />
        </StartButton>
        <TaskList>
          {tasks.map(([name, icon, state]) => (
            <TaskButton key={name} aria-label={name} $state={state}>
              {icon}
            </TaskButton>
          ))}
        </TaskList>
        <Tray>
          <TrayMore aria-label="Mostrar ícones ocultos">
            <svg width="8" height="6" viewBox="0 0 8 6">
              <path d="M0 5h8L4 1z" fill="#eef2f4" />
            </svg>
          </TrayMore>
          <svg width="16" height="16" viewBox="0 0 16 16">
            <path d="M1.500 1v14" stroke="#fff" strokeWidth="1.500" />
            <path d="M2 2h6v2h7l-2 5H8V7.500H2z" fill="#fff" />
          </svg>
          <svg width="16" height="16" viewBox="0 0 16 16">
            <path d="M6 3.500h9v7H6M10.500 11v3M7 14.500h7M2.500 6v4.500h3" fill="none" stroke="#fff" strokeWidth="1.200" />
            <path d="M1 1.500h3v4H1z" fill="none" stroke="#fff" />
          </svg>
          <svg width="16" height="16" viewBox="0 0 16 16">
            <path d="M1 5h2.500L8 1.500v13L3.500 11H1z" fill="#fff" />
            <path d="M10 5.500q1.500 2.500 0 5M12 3.500q3 4.500 0 9" fill="none" stroke="#fff" strokeWidth="1.200" />
          </svg>
          <svg width="16" height="16" viewBox="0 0 16 16">
            <path d="M8 0h7v6H8z" fill="#1c2fb4" />
            <path d="M2 2q0-1.500 2-1.500T6 3t-2 3v5" fill="none" stroke="#e9efc0" strokeWidth="2" />
            <path d="M5 7h11v9H5z" fill="#ece43c" />
            <path d="M7 9.500h7M7 12.500h7" stroke="#8a8420" />
          </svg>
          <TrayTexts>
            <TrayText $width={36}>
              POR
              <br />
              PTB2
            </TrayText>
            <TrayText $width={74}>
              23:24
              <br />
              03/08/2014
            </TrayText>
          </TrayTexts>
        </Tray>
      </Taskbar>
    </Screen>
  );
}

export default App;
